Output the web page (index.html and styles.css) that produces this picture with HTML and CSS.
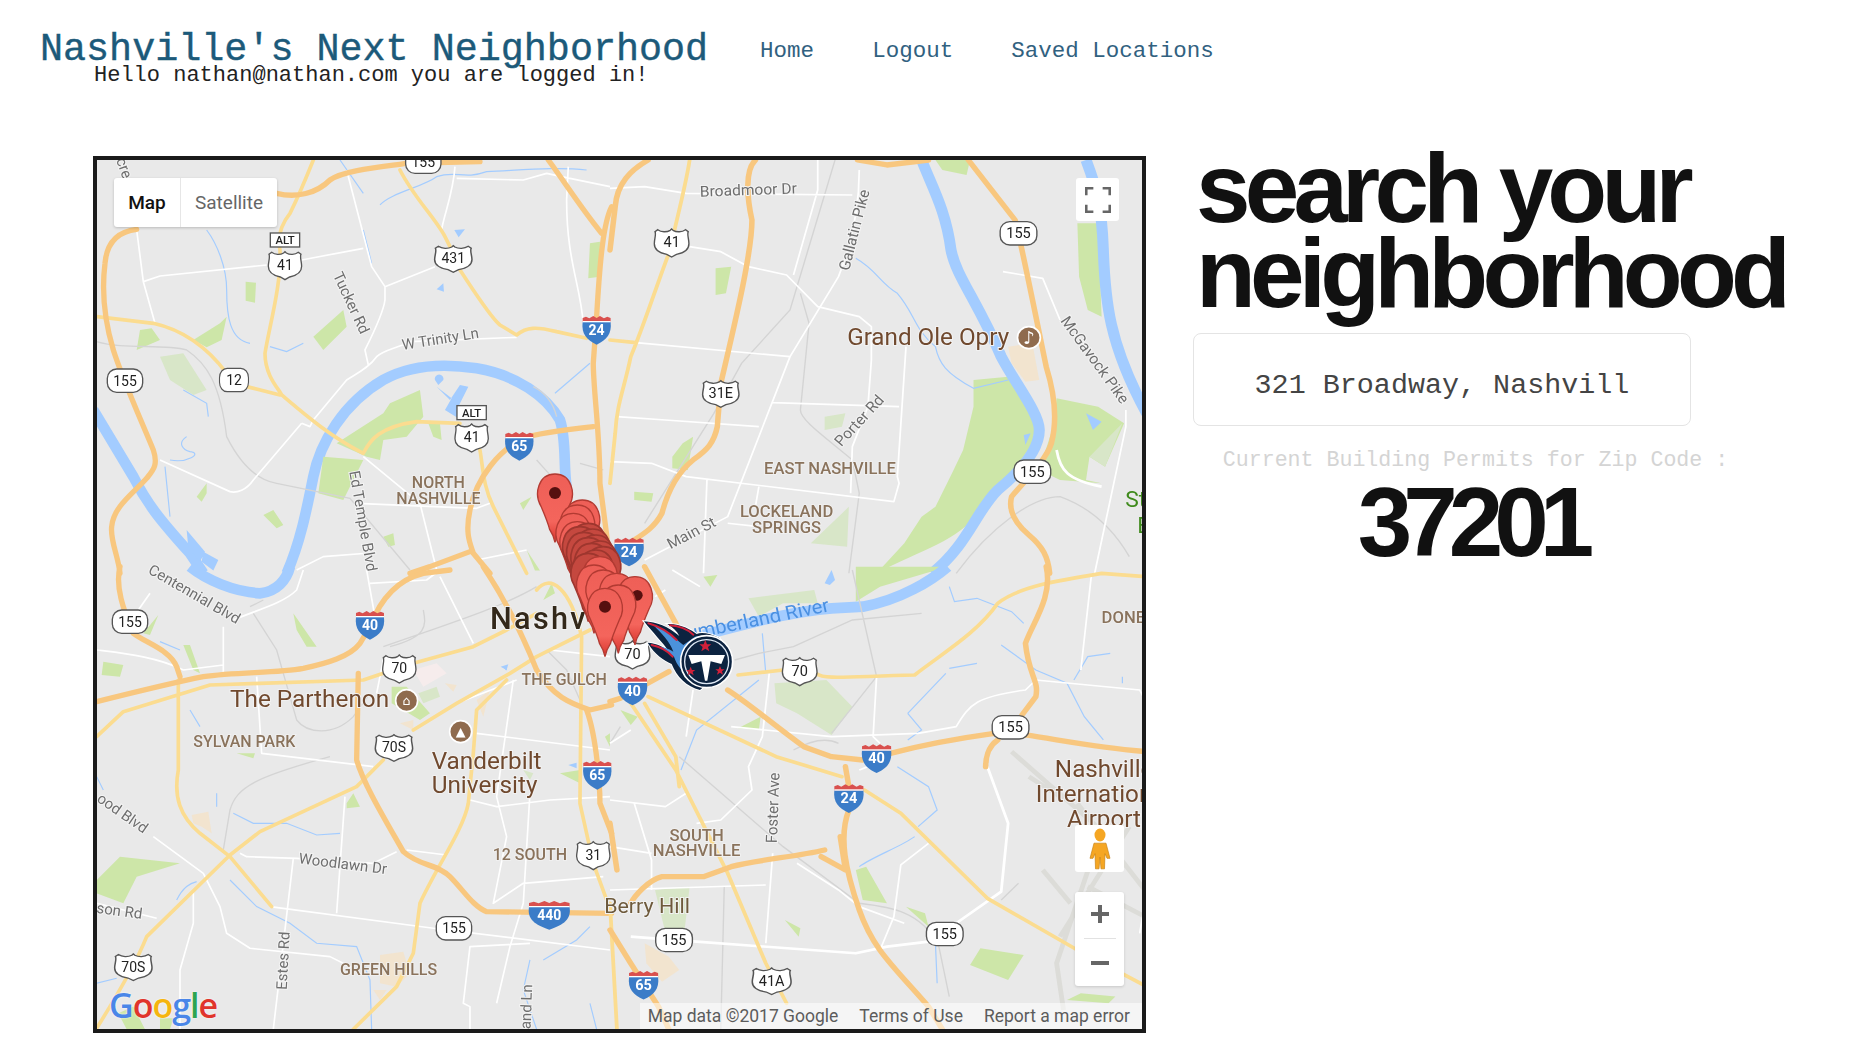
FILE: index.html
```html
<!DOCTYPE html>
<html lang="en">
<head>
    <meta charset="UTF-8">
    <title>Nashville's Next Neighborhood</title>
    <link rel="stylesheet" href="styles.css">
</head>
<body>
    <header class="top">
        <div class="brand">
            <div class="brand-title">Nashville's Next Neighborhood</div>
            <div class="brand-hello">Hello nathan@nathan.com you are logged in!</div>
        </div>
        <nav class="nav">
            <a href="#">Home</a>
            <a href="#">Logout</a>
            <a href="#">Saved Locations</a>
        </nav>
    </header>

    <main class="main">
        <div class="map">
            <svg class="map-art" viewBox="97 160 1045 869" xmlns="http://www.w3.org/2000/svg">
                <defs>
                    <g id="us"><path d="M-40-38C-30-30-14-30-4-36L0-40L4-36C14-30 30-30 40-38L48-32C44-24 50-10 50 4C50 24 34 32 14 36L0 44L-14 36C-34 32-50 24-50 4C-50-10-44-24-48-32Z" fill="#fff" stroke="#555" stroke-width="4"/></g>
                    <g id="oval"><rect x="-53" y="-35" width="106" height="70" rx="28" fill="#fff" stroke="#555" stroke-width="4"/></g>
                    <g id="alt"><rect x="-44" y="-21" width="88" height="42" fill="#fff" stroke="#555" stroke-width="4"/></g>
                    <g id="inter"><path d="M-42-24H42C46 12 30 30 0 44C-30 30-46 12-42-24Z" fill="#3b7cc8"/><path d="M-42-24V-36L-32-40L-22-35L-10-42L0-36L10-42L22-35L32-40L42-36V-24Z" fill="#d9504e"/><path d="M-42-25H42" stroke="#fff" stroke-width="4"/></g>
                    <g id="pin"><path d="M0 150C-5 125-12 118-16 112C-20 95-30 70-42 42C-64 5-50-55 0-55C50-55 64 5 42 42C30 70 20 95 16 112C12 118 5 125 0 150Z" fill="url(#pinfill)" stroke="#b23a32" stroke-width="4"/></g>
                    <g id="pin-dark"><path d="M0 150C-5 125-12 118-16 112C-20 95-30 70-42 42C-64 5-50-55 0-55C50-55 64 5 42 42C30 70 20 95 16 112C12 118 5 125 0 150Z" fill="#c5483f" stroke="#9e362e" stroke-width="5"/></g>
                    <linearGradient id="pinfill" x1="0" y1="0" x2="0" y2="1"><stop offset="0" stop-color="#ee5f57"/><stop offset=".7" stop-color="#f4655c"/><stop offset="1" stop-color="#d8332c"/></linearGradient>
                </defs>

                <!-- top left of the map -->
                <g transform="translate(90 150) scale(.3333)">
                    <path class="river" d="M590 1270C630 1180 650 1080 670 980C690 880 760 760 880 690C960 645 1060 640 1160 655C1280 675 1370 740 1410 810C1430 870 1420 950 1430 1010"/>
                    <path class="river" stroke-width="28" d="M10 780L130 980C170 1060 210 1110 300 1210L340 1270"/>
                    <path class="stream" d="M350 240C380 280 410 350 410 420C410 500 420 570 480 580M870 165C900 130 1000 110 1040 80C1100 60 1120 90 1190 65C1300 60 1400 50 1490 60M750 30L820 130M820 240L845 340M540 590L590 605L640 580M1395 730L1500 640M280 720L350 760L355 800M225 950L240 1100M290 860C260 880 280 900 300 905C340 910 290 940 240 930"/>
                    <path class="water" d="M1093 240L1125 238L1106 262ZM1040 418L1060 400L1062 425ZM1040 710L1080 750L1110 705L1135 710L1105 770L1105 805L1065 780L1085 745ZM1035 690A13 13 0 1 1 1060 690L1045 705ZM290 1140L345 1205L330 1235L295 1195ZM340 1205L385 1230L370 1262L335 1235Z"/>
                    <path class="park" d="M467 395L498 398L495 458L467 452ZM140 600L150 540L185 535L210 570ZM310 570L390 520L410 500L395 570L350 592ZM670 560L760 480L770 530L700 600ZM1500 280L1530 275L1530 380L1495 385ZM685 1030L700 920L820 930L760 1050ZM740 880L880 790L900 760L990 720L1000 800L950 860L880 870L870 930L830 920ZM1015 820L1050 820L1055 870L1030 860ZM320 1040L350 1000L350 1030L335 1055ZM520 1095L550 1080L580 1125L560 1135ZM880 1160L910 1150L915 1185L895 1190ZM1290 1060L1325 1040L1300 1080ZM1310 1200L1350 1262L1335 1262Z"/>
                    <path class="park-pale" d="M210 620L280 610L350 720L310 735L240 690Z"/>
                    <path class="rail" d="M20 575C100 600 220 580 290 600C350 640 390 700 410 860C450 940 500 990 560 1000L780 1045L960 1260M1330 710C1370 730 1390 760 1400 800M1340 930L1385 980M1470 940L1540 960"/>
                    <path class="minor" d="M140 240L160 395L195 520M160 395L210 378L530 345M635 330L820 295M770 60L845 350L885 410L885 450C880 490 840 570 825 600L835 645M885 410L1035 350M670 810L770 690C800 670 835 655 860 620C880 600 920 595 960 575L1280 562M1095 50C1090 130 1060 200 1055 240M1100 85L1300 90L1370 70L1440 85L1560 110M1435 50L1430 150C1430 330 1470 400 1480 520M635 820L660 830L670 810M635 820L490 990C470 1020 440 1030 420 1025L210 930M820 920L990 1060L1040 1260M800 1060L1160 1075L1200 1060M620 1260L700 1220L830 1210M1310 1200L1160 1230"/>
                    <path class="yellow" d="M670 30C650 80 630 130 600 190C580 215 560 250 570 300C575 400 540 520 525 610C525 680 570 720 575 735C640 790 720 860 820 910C840 870 870 830 980 815L1110 820M470 710L570 735M20 500L190 520C280 540 350 590 410 670M930 60C970 140 1040 210 1065 260L1080 290M1110 360C1150 420 1200 500 1230 525L1280 555C1310 530 1340 530 1400 545L1490 565M1170 900C1180 960 1180 1010 1210 1070L1310 1270"/>
                    <path class="orange" d="M560 130C620 145 680 130 720 90C760 60 880 50 950 40L1170 35M140 238C80 245 50 280 45 340C35 420 40 500 70 600C95 680 140 780 190 900C205 945 190 960 170 985C130 1030 70 1070 65 1130C60 1170 85 1220 90 1270M1375 30C1420 90 1470 170 1535 250M1565 170C1540 220 1530 330 1520 500L1510 640C1510 720 1530 850 1530 1000L1565 1270M1510 830C1420 840 1340 850 1300 865C1230 900 1160 980 1140 1080C1125 1150 1140 1180 1150 1210L1200 1270M1140 1205L1020 1250L960 1270"/>

                    <g transform="translate(1000 35)"><use href="#oval"/><text class="sh">155</text></g>
                    <g transform="translate(585 270)"><use href="#alt"/><text class="sh sh-alt">ALT</text></g>
                    <g transform="translate(585 345)"><use href="#us"/><text class="sh">41</text></g>
                    <g transform="translate(1090 325)"><use href="#us" transform="scale(1.12 .95)"/><text class="sh">431</text></g>
                    <g transform="translate(1520 540)"><use href="#inter"/><text class="sh sh-int">24</text></g>
                    <g transform="translate(105 692)"><use href="#oval"/><text class="sh">155</text></g>
                    <g transform="translate(432 690)"><use href="#oval" transform="scale(.82 1)"/><text class="sh">12</text></g>
                    <g transform="translate(1145 788)"><use href="#alt"/><text class="sh sh-alt">ALT</text></g>
                    <g transform="translate(1145 862)"><use href="#us"/><text class="sh">41</text></g>
                    <g transform="translate(1288 888)"><use href="#inter"/><text class="sh sh-int">65</text></g>

                    <text class="road" transform="translate(728 375) rotate(65)">Tucker Rd</text>
                    <text class="road" transform="translate(938 600) rotate(-9)">W Trinity Ln</text>
                    <text class="road" transform="translate(778 965) rotate(80)">Ed Temple Blvd</text>
                    <text class="road" transform="translate(78 30) rotate(70)">cre</text>
                    <text class="hood" x="1045" y="1015">NORTH</text>
                    <text class="hood" x="1045" y="1062">NASHVILLE</text>
                </g>

                <!-- top right of the map -->
                <g transform="translate(610 150) scale(.3462 .3333)">
                    <path class="park" d="M1050 690L1150 680L1230 820L1220 880C1170 970 1080 1040 1060 1090C1010 1170 900 1200 770 1270L850 1180L900 1100L940 1070L990 965L1020 900L1050 770ZM1290 745L1410 770L1485 820L1430 950L1385 920L1375 990L1420 1000L1300 990L1240 960L1280 830ZM305 355L350 350L335 430L305 435ZM940 30L1040 30L1030 75L960 60ZM180 920L210 880L240 860L225 960L180 955ZM70 1025L125 1030L120 1055L70 1050ZM1350 220L1410 220L1420 500L1380 480L1355 380Z"/>
                    <path class="park-pale" d="M620 800L680 790L670 830L620 840ZM580 1180L690 1070L685 1190ZM1385 920L1480 820L1430 950Z"/>
                    <path class="tan" d="M1150 590L1220 580L1240 690L1200 695L1160 640Z"/>
                    <path class="river" d="M900 30C930 110 970 180 985 300C1000 380 1060 450 1130 620C1170 700 1240 790 1240 840C1240 900 1190 960 1120 1020C1060 1080 1030 1190 930 1270"/>
                    <path class="river" stroke-width="25" d="M1375 30C1400 100 1420 150 1425 300C1430 450 1440 580 1550 790"/>
                    <path class="stream" d="M710 325C770 360 780 400 830 430C880 490 880 540 940 590C950 640 970 670 1050 715L1150 690"/>
                    <path class="water" d="M1375 790L1420 815L1395 840ZM1195 855L1215 850L1200 885Z"/>
                    <path class="rail" d="M650 30L520 480L380 640L300 790L100 1120M550 430L575 520L550 780C550 810 620 860 700 930L720 1030L690 1270M1000 1270C1100 1130 1220 1040 1300 1040C1380 1070 1450 1130 1500 1220"/>
                    <path class="minor" d="M720 60C720 130 710 250 660 380L520 620L340 1100L100 1230M0 115L100 110L220 130L700 135M230 290L320 305L400 350L510 375L600 470L720 500L755 530L755 630L745 770L700 890L695 1030M75 578L520 620M20 800L160 810L430 830M470 758L835 770M855 590L830 980L835 1000L820 1055L220 980L120 940L0 935M1135 365L1250 385L1300 510M1490 780L1490 830L1400 1270M280 990L270 1270M430 1010L420 1070M340 1120L430 1130M600 30L600 120L530 375"/>
                    <path class="minor-wide" d="M1290 900C1300 960 1320 990 1420 1010"/>
                    <path class="yellow" d="M230 30C220 100 200 180 170 310C130 420 100 520 60 620C40 720 20 760 15 850L0 1000M0 570L75 578"/>
                    <path class="orange" d="M1035 30L1170 210C1190 290 1230 500 1260 650C1290 750 1290 820 1275 880C1260 930 1200 990 1160 1040C1150 1080 1170 1120 1210 1155C1250 1190 1265 1220 1270 1270M420 30C390 60 395 140 410 210C410 300 370 480 320 700L310 830C300 880 280 900 240 930C180 980 160 1050 150 1090C130 1130 100 1150 70 1170M110 30C60 60 20 100 15 170L0 300M715 30L800 45L920 30"/>

                    <g transform="translate(178 277)"><use href="#us"/><text class="sh">41</text></g>
                    <g transform="translate(320 730)"><use href="#us" transform="scale(1.05 .95)"/><text class="sh">31E</text></g>
                    <g transform="translate(1180 250)"><use href="#oval"/><text class="sh">155</text></g>
                    <g transform="translate(1220 965)"><use href="#oval"/><text class="sh">155</text></g>
                    <g transform="translate(55 1205)"><use href="#inter"/><text class="sh sh-int">24</text></g>

                    <text class="road" transform="translate(260 140) rotate(-2)">Broadmoor Dr</text>
                    <text class="road" transform="translate(690 364) rotate(-76)">Gallatin Pike</text>
                    <text class="road" transform="translate(1300 512) rotate(55)">McGavock Pike</text>
                    <text class="road" transform="translate(668 892) rotate(-48)">Porter Rd</text>
                    <text class="road" transform="translate(175 1198) rotate(-28)">Main St</text>
                    <text class="poi" x="685" y="585">Grand Ole Opry</text>
                    <circle class="poi-dot" cx="1210" cy="563" r="33"/>
                    <text class="poi-icon" x="1210" y="583">♪</text>
                    <text class="hood hood-start" x="445" y="973">EAST NASHVILLE</text>
                    <text class="hood" x="510" y="1102">LOCKELAND</text>
                    <text class="hood" x="510" y="1150">SPRINGS</text>
                    <text class="green-label" x="1488" y="1072">St</text>
                    <text class="green-label" x="1523" y="1150">B</text>
                </g>

                <!-- bottom left of the map -->
                <g transform="translate(90 570) scale(.3333)">
                    <path class="river" d="M300 -10C350 30 430 65 510 70C560 65 590 30 600 -10"/>
                    <path class="park" d="M20 930L90 860L270 880L140 920L100 1000L20 970ZM40 275L100 285L90 320L35 315ZM610 130L680 230L650 230L620 180ZM160 190L205 135L180 195ZM770 700L790 670L810 710L770 715ZM280 225L300 225L330 310L310 300ZM905 350L950 350L1020 430L990 450L905 400ZM440 550L495 550L490 565ZM1410 610L1470 600L1470 640ZM85 1330L130 1310L165 1378H110ZM210 1345L250 1345L240 1378H210ZM1385 40L1360 90L1395 70ZM1545 500L1560 490L1560 530Z"/>
                    <path class="park-pale" d="M985 370L1040 350L1050 380L1000 400ZM1300 600L1330 610L1320 630Z"/>
                    <path class="pinkish" d="M970 300L1040 280L1070 310L1000 350Z"/>
                    <path class="tan" d="M305 735L355 725L365 790L335 770L310 760ZM870 1155L940 1145L960 1210L920 1250L870 1240ZM1065 340L1100 345L1090 365ZM930 460L970 450L970 480ZM850 1260L890 1260L870 1290ZM1160 390L1200 360L1180 440Z"/>
                    <path class="stream" d="M430 730L490 760L590 760L680 795L750 790M420 930L500 1010L600 1060L680 1120L800 1130L840 1230L845 1378M260 990C280 950 300 940 320 935M300 420L330 470M380 670V710M20 620L40 660M210 215L270 240M1320 1170L1300 1260L1340 1378M1500 1070L1460 1110L1360 1170M1500 1300L1520 1378M20 1240L80 1225M1240 290L1250 300"/>
                    <path class="water" d="M1232 290L1255 283L1250 300ZM1435 585L1460 578L1460 595Z"/>
                    <path class="rail" d="M490 130L560 240L620 450C650 490 730 500 790 440L840 370M420 720C440 650 500 620 720 560M400 840L420 720M1000 120C1010 170 1010 200 900 230M1340 50C1240 110 1080 160 880 230M1370 240L1430 300L1470 390M480 110L520 90"/>
                    <path class="minor" d="M400 170L400 310M20 240C100 250 200 260 280 300L400 285M500 320L515 550L850 590M1160 490L1560 540M950 840L1070 855M190 800L340 910L390 1010L410 1090L480 1135L720 1160L800 1200M450 850L470 860L620 865L850 880L920 845M540 1010L1030 1075L1560 1140M610 865L550 1378M765 680L740 1030M310 960L310 1060L270 1200L270 1378M20 1000L200 1045M1320 1120L1140 1130L1120 1300L1140 1310L1140 1378M840 40L1010 30L1050 0M1050 20L1150 220M1270 330L1220 680L1250 800L1210 1000L1300 940L1540 920M430 150C500 120 580 100 620 60L640 0M145 120L180 70M1320 670L1300 1000L1260 1130L1220 1300M1140 690L1220 710L1380 690L1560 680M830 0L860 170M1380 240L1560 260M860 370L880 270M1100 400L1280 330"/>
                    <path class="yellow" d="M20 500L100 425L360 345L820 330L880 310M970 280L1150 230L1250 180L1340 130M970 480L1100 400L1260 310L1340 260L1500 180M880 570L800 650L510 785L420 855L170 1100C130 1200 60 1310 20 1375M265 330L265 600C250 680 270 740 330 790L420 860L545 1010M1250 330L1160 420L1150 550L1135 700C1120 780 1040 890 990 1000L970 1150L920 1250L790 1378M1340 60C1380 10 1440 50 1475 200L1470 700L1510 880L1565 1030"/>
                    <path class="orange" d="M20 395C120 370 240 340 340 320C440 305 560 310 640 295C710 280 780 260 810 220L840 170C870 90 920 30 1000 10L1080 0M90 -10C75 50 100 120 130 190C170 220 240 240 260 290L270 320M805 310L800 570C820 640 880 740 940 845C990 890 1040 880 1080 920C1120 960 1150 1010 1190 1025L1565 1030M1180 -10C1220 50 1280 150 1340 300C1390 380 1440 400 1500 420L1565 405M1490 420C1520 500 1530 650 1530 700L1565 790"/>

                    <g transform="translate(120 155)"><use href="#oval"/><text class="sh">155</text></g>
                    <g transform="translate(840 165)"><use href="#inter"/><text class="sh sh-int">40</text></g>
                    <g transform="translate(928 295)"><use href="#us"/><text class="sh">70</text></g>
                    <g transform="translate(912 532)"><use href="#us" transform="scale(1.12 .95)"/><text class="sh">70S</text></g>
                    <g transform="translate(1522 615)"><use href="#inter"/><text class="sh sh-int">65</text></g>
                    <g transform="translate(1510 855)"><use href="#us"/><text class="sh">31</text></g>
                    <g transform="translate(1378 1035)"><use href="#inter" transform="scale(1.45 1)"/><text class="sh sh-int">440</text></g>
                    <g transform="translate(1092 1075)"><use href="#oval"/><text class="sh">155</text></g>
                    <g transform="translate(130 1190)"><use href="#us" transform="scale(1.12 .95)"/><text class="sh">70S</text></g>

                    <text class="road" transform="translate(172 8) rotate(30)">Centennial Blvd</text>
                    <text class="road" transform="translate(625 880) rotate(7)">Woodlawn Dr</text>
                    <text class="road" transform="translate(18 692) rotate(35)">ood Blvd</text>
                    <text class="road" transform="translate(18 1028) rotate(8)">son Rd</text>
                    <text class="road" transform="translate(590 1260) rotate(-87)">Estes Rd</text>
                    <text class="road" transform="translate(1322 1378) rotate(-88)">and Ln</text>
                    <text class="city" x="1200" y="176">Nashv</text>
                    <text class="hood hood-start" x="1295" y="346">THE GULCH</text>
                    <text class="hood hood-start" x="310" y="532">SYLVAN PARK</text>
                    <text class="hood hood-start" x="1208" y="870">12 SOUTH</text>
                    <text class="hood hood-start" x="750" y="1215">GREEN HILLS</text>
                    <text class="poi poi-big" x="420" y="412">The Parthenon</text>
                    <circle class="poi-dot" cx="950" cy="392" r="33"/>
                    <text class="poi-icon poi-icon-small" x="950" y="405">⌂</text>
                    <circle class="poi-dot" cx="1112" cy="485" r="33"/>
                    <text class="poi-icon poi-icon-small" x="1112" y="498">▲</text>
                    <text class="poi poi-big" x="1025" y="597">Vanderbilt</text>
                    <text class="poi poi-big" x="1025" y="670">University</text>
                </g>

                <!-- bottom right of the map -->
                <g transform="translate(610 570) scale(.3462 .3333)">
                    <path class="park" d="M710 95L780 50L975 -10H710ZM1040 1185L1070 1135L1195 1155L1150 1230ZM740 890L710 900L730 990L800 1000ZM855 1010L910 1030L920 1070ZM370 475L435 440L430 480ZM270 20L310 15L290 50ZM30 420L80 440L60 465ZM1320 1290L1360 1270L1460 1280L1440 1300ZM505 1050L550 1075L545 1100Z"/>
                    <path class="park-pale" d="M475 340L625 330L700 410L640 495L540 430L480 400ZM400 85L590 60L600 100L500 100L430 140ZM130 960L230 950L210 1130L170 1130Z"/>
                    <path class="tan" d="M100 1120L170 1160L200 1200L150 1235L105 1180Z"/>
                    <path class="river" stroke-width="24" d="M270 195C400 160 520 125 640 115L730 110C840 90 930 30 975 -10"/>
                    <path class="water" d="M620 40L640 0L650 30L635 45Z"/>
                    <path class="stream" d="M980 50L995 95L1060 85L1160 125L1195 160M860 430L900 480L860 510M1130 225L1230 300L1320 340L1370 440L1425 510M830 590L920 650L945 720L890 770M720 890C760 860 840 830 880 800M980 295L1060 280M860 430L970 310M1340 330L1380 260L1445 250M205 600L250 480L430 330M440 190L450 310M940 1120L945 1240M1480 320L1480 340"/>
                    <path class="runway" d="M1160 545L1440 800M1210 620L1300 680M1350 700L1545 960M1310 1320L1290 1180L1420 780M1250 900L1330 1000M1500 770L1300 1100M1380 950L1545 1040"/>
                    <path class="rail" d="M320 1378L330 950M660 520C640 510 600 500 530 540M200 560L500 830L720 1000C800 1010 900 1020 950 1130L980 1280M700 0L770 320L640 490M900 130L700 150L530 230L430 250L360 270M30 470L0 520M1180 940L1130 990"/>
                    <path class="minor" d="M350 470L640 500L890 490L1000 470C1040 400 1060 380 1200 360L1230 330L1530 360L1545 390M240 360L220 500M460 310L440 500L400 590L410 660L320 750L250 760M770 320L760 500L780 520M470 850L450 1120M0 690L160 710L220 670M70 700L120 870L120 960M0 830L120 850M0 960L450 945M1390 20L1360 300M720 600L745 590M920 820L840 885L820 1040L780 1140M180 0L260 50M130 80L160 60M0 520L60 480M540 880L660 960L720 1010L850 1060M1545 1000L1530 1090"/>
                    <path class="minor-wide" d="M60 1100L250 1115L710 1150L800 1130L920 1115L1000 1060L1130 965L1150 760L1090 590"/>
                    <path class="yellow" d="M370 315L500 300M595 310C620 330 680 320 880 315C960 250 1060 190 1120 100C1180 50 1300 30 1420 10L1550 20M110 380L480 560L670 620M735 660L840 730L1090 985L1350 1140L1550 1250M60 400L190 600L340 910L450 1180L510 1300M100 400L190 560L200 650M0 1000L20 1378"/>
                    <path class="orange" d="M340 360C400 400 480 470 560 530L640 560L730 570M810 550C920 520 1040 500 1110 490L1200 495C1300 510 1420 535 1550 545M1260 -10C1280 80 1220 160 1200 220C1210 320 1240 330 1230 380L1190 435M1120 510C1090 530 1085 570 1085 590M680 590L690 650M690 720C660 800 680 900 720 1020C760 1140 820 1190 920 1310L960 1378M620 840C540 860 420 870 350 890L270 920L150 920C110 930 70 980 60 1000M0 1080L60 1180L140 1310L170 1378M100 345L170 305M0 395L30 385M100 -10L190 160L220 220M0 760L20 900M610 860L680 900L665 800"/>

                    <g transform="translate(65 253)"><use href="#us"/><text class="sh">70</text></g>
                    <g transform="translate(548 303)"><use href="#us"/><text class="sh">70</text></g>
                    <g transform="translate(65 362)"><use href="#inter"/><text class="sh sh-int">40</text></g>
                    <g transform="translate(770 565)"><use href="#inter"/><text class="sh sh-int">40</text></g>
                    <g transform="translate(690 685)"><use href="#inter"/><text class="sh sh-int">24</text></g>
                    <g transform="translate(1157 472)"><use href="#oval"/><text class="sh">155</text></g>
                    <g transform="translate(185 1110)"><use href="#oval"/><text class="sh">155</text></g>
                    <g transform="translate(967 1092)"><use href="#oval"/><text class="sh">155</text></g>
                    <g transform="translate(467 1232)"><use href="#us" transform="scale(1.12 .95)"/><text class="sh">41A</text></g>
                    <g transform="translate(97 1245)"><use href="#inter"/><text class="sh sh-int">65</text></g>

                    <text class="river-label" transform="translate(190 218) rotate(-12)">Cumberland River</text>
                    <text class="road" transform="translate(482 820) rotate(-88)">Foster Ave</text>
                    <text class="hood hood-start" x="1420" y="160">DONE</text>
                    <text class="hood" x="250" y="812">SOUTH</text>
                    <text class="hood" x="250" y="858">NASHVILLE</text>
                    <text class="poi poi-dim" x="-17" y="1030">Berry Hill</text>
                    <text class="poi" x="1285" y="622">Nashville</text>
                    <text class="poi" x="1230" y="695">Internation</text>
                    <text class="poi" x="1320" y="770">Airport</text>
                </g>

                <!-- pins and stadium logo -->
                <g transform="translate(520 460) scale(.3333)">
                    <use href="#pin" x="105" y="97"/>
                    <circle class="pin-dot" cx="105" cy="99" r="18"/>
                    <use href="#pin" x="187" y="175"/>
                    <use href="#pin" x="172" y="190"/>
                    <use href="#pin" x="160" y="215"/>
                    <use href="#pin" x="172" y="240"/>
                    <use href="#pin-dark" x="205" y="245"/>
                    <use href="#pin-dark" x="180" y="255"/>
                    <use href="#pin-dark" x="218" y="262"/>
                    <use href="#pin-dark" x="192" y="272"/>
                    <use href="#pin-dark" x="228" y="280"/>
                    <use href="#pin-dark" x="205" y="288"/>
                    <use href="#pin-dark" x="240" y="298"/>
                    <use href="#pin-dark" x="215" y="305"/>
                    <use href="#pin-dark" x="250" y="315"/>
                    <use href="#pin-dark" x="228" y="325"/>
                    <use href="#pin-dark" x="205" y="335"/>
                    <use href="#pin" x="240" y="345"/>
                    <use href="#pin" x="222" y="370"/>
                    <use href="#pin" x="250" y="385"/>
                    <use href="#pin" x="290" y="395"/>
                    <use href="#pin" x="345" y="405"/>
                    <circle class="pin-dot" cx="352" cy="406" r="16"/>
                    <use href="#pin" x="295" y="430"/>
                    <use href="#pin" x="255" y="440"/>
                    <circle class="pin-dot" cx="255" cy="440" r="18"/>

                    <path d="M372 484C410 486 445 500 478 528C470 512 458 502 442 492C480 490 515 510 530 522C545 515 570 520 600 535L620 620L540 690C500 680 470 650 455 612C430 600 405 585 383 548C410 550 430 560 445 572C430 550 400 520 372 484Z" fill="#0c2340" stroke="#fff" stroke-width="6" paint-order="stroke"/>
                    <path d="M400 495C430 505 460 530 490 555L525 530C545 525 565 528 590 540L510 650C490 640 470 615 462 590C445 575 425 565 410 560C430 560 445 565 460 575C450 545 425 520 400 495Z" fill="#4b92db"/>
                    <path d="M385 490C420 500 445 515 470 540M395 555C420 560 445 575 458 590M450 496C480 498 505 510 520 524" fill="none" stroke="#d0203a" stroke-width="6" stroke-linecap="round"/>
                    <circle cx="560" cy="605" r="78" fill="#0c2340" stroke="#fff" stroke-width="5"/>
                    <circle cx="560" cy="605" r="66" fill="#0c2340" stroke="#dfe9f5" stroke-width="4"/>
                    <path d="M505 585H615L604 612L572 604L562 662H555L544 604L515 612Z" fill="#fff"/>
                    <path d="M556 540L561 553H574L564 561L568 574L556 566L544 574L548 561L538 553H551ZM512 620L516 630H526L518 636L521 646L512 640L503 646L506 636L498 630H508ZM600 618L604 628H614L606 634L609 644L600 638L591 644L594 634L586 628H596Z" fill="#d0203a"/>
                </g>
            </svg>

            <div class="map-type">
                <span class="map-type-on">Map</span>
                <span class="map-type-off">Satellite</span>
            </div>
            <div class="map-btn map-full">
                <svg width="26" height="26" viewBox="0 0 28 28"><path d="M1 9V1H9M19 1H27V9M27 19V27H19M9 27H1V19" fill="none" stroke="#666" stroke-width="3.5"/></svg>
            </div>
            <div class="map-btn map-peg">
                <svg width="22" height="42" viewBox="0 0 22 36" preserveAspectRatio="none"><circle cx="11" cy="6" r="5.5" fill="#f5a623"/><path d="M5 13H17L21 26H18L16 22L15.5 35H12L11 25L10 35H6.5L6 22L4 26H1Z" fill="#f5a623" stroke="#c67f10" stroke-width=".6"/></svg>
            </div>
            <div class="map-btn map-zoom">
                <svg class="zoom-sign" width="18" height="18" viewBox="0 0 18 18"><path d="M7 0H11V7H18V11H11V18H7V11H0V7H7Z" fill="#666"/></svg>
                <div class="zoom-line"></div>
                <svg class="zoom-sign" width="18" height="18" viewBox="0 0 18 18"><path d="M0 7H18V11H0Z" fill="#666"/></svg>
            </div>
            <div class="google"><span class="g-blue">G</span><span class="g-red">o</span><span class="g-yellow">o</span><span class="g-blue">g</span><span class="g-green">l</span><span class="g-red">e</span></div>
            <div class="map-foot">
                <span>Map data ©2017 Google</span>
                <span>Terms of Use</span>
                <span>Report a map error</span>
            </div>
        </div>

        <section class="panel">
            <h1 class="panel-title">search your<br>neighborhood</h1>
            <div class="search-box">321 Broadway, Nashvill</div>
            <p class="zip-label">Current Building Permits for Zip Code :</p>
            <p class="zip-code">37201</p>
        </section>
    </main>
</body>
</html>
```

FILE: styles.css
```css
body{
    margin: 0;
    background-color: #fff;
    overflow: hidden;
}

/* header */
.top{
    display: flex;
    height: 156px;
    padding: 33px 0 0 40px;
    box-sizing: border-box;
}
.brand-title{
    font-family: "Liberation Mono", monospace;
    font-size: 38.4px;
    line-height: 34px;
    color: #1c5a7a;
    white-space: nowrap;
    -webkit-text-stroke: .4px #1c5a7a;
}
.brand-hello{
    margin: -3px 0 0 54px;
    font-family: "Liberation Mono", monospace;
    font-size: 22px;
    line-height: 24px;
    color: #222;
    white-space: nowrap;
}
.nav{
    display: flex;
    gap: 58px;
    margin-left: 52px;
    padding-top: 4px;
}
.nav a{
    font-family: "Liberation Mono", monospace;
    font-size: 22.5px;
    line-height: 28px;
    color: #31617f;
    text-decoration: none;
}

/* main */
.main{
    display: flex;
    padding-left: 93px;
}
.map{
    position: relative;
    flex: none;
    width: 1045px;
    height: 869px;
    border: 4px solid #1a1a1a;
    background-color: #e9e9e9;
    overflow: hidden;
    font-family: Roboto, sans-serif;
}
.map-art{
    display: block;
    width: 1045px;
    height: 869px;
    filter: blur(.6px);
}

/* map drawing */
.river{ fill: none; stroke: #a3ccff; stroke-width: 32; }
.stream{ fill: none; stroke: #a3ccff; stroke-width: 3.5; }
.water{ fill: #a3ccff; }
.park{ fill: #cde6a8; }
.park-pale{ fill: #d8e6c8; }
.tan{ fill: #f2e4cf; }
.pinkish{ fill: #f6ecec; }
.rail{ fill: none; stroke: #d4d4d4; stroke-width: 4; }
.runway{ fill: none; stroke: #dcdcd8; stroke-width: 14; }
.minor{ fill: none; stroke: #fff; stroke-width: 5; stroke-linejoin: round; }
.minor-wide{ fill: none; stroke: #fff; stroke-width: 8; stroke-linejoin: round; }
.yellow{ fill: none; stroke: #fbdc90; stroke-width: 11; stroke-linejoin: round; stroke-linecap: round; }
.orange{ fill: none; stroke: #f8c77f; stroke-width: 16; stroke-linejoin: round; stroke-linecap: round; }

.sh{ font-size: 42px; fill: #222; text-anchor: middle; dominant-baseline: central; }
.sh-alt{ font-size: 34px; font-weight: 500; }
.sh-int{ font-size: 42px; font-weight: 700; fill: #fff; }
.road{ font-size: 45px; fill: #6e6e6e; stroke: #f4f4f4; stroke-width: 6; paint-order: stroke; }
.hood{ font-size: 48px; font-weight: 500; fill: #8a735c; text-anchor: middle; stroke: #f2f2f2; stroke-width: 5; paint-order: stroke; }
.hood-start{ text-anchor: start; }
.poi{ font-size: 70px; fill: #70492e; stroke: #f2f2f2; stroke-width: 6; paint-order: stroke; }
.poi-big{ font-size: 73px; }
.poi-dim{ font-size: 62px; fill: #6e5a3c; }
.poi-dot{ fill: #8f6b4e; stroke: #fff; stroke-width: 5; }
.poi-icon{ font-family: "DejaVu Sans", sans-serif; font-size: 54px; fill: #fff; text-anchor: middle; }
.poi-icon-small{ font-size: 38px; }
.city{ font-size: 92px; font-weight: 500; letter-spacing: 7px; fill: #33281a; stroke: #f2f2f2; stroke-width: 6; paint-order: stroke; }
.river-label{ font-size: 58px; fill: #4a90e2; }
.green-label{ font-size: 66px; fill: #3f8a1c; }
.pin-dot{ fill: #56100f; }

/* map controls */
.map-type{
    position: absolute;
    left: 17px;
    top: 18px;
    display: flex;
    height: 49px;
    background-color: #fff;
    border-radius: 3px;
    font-size: 19px;
    line-height: 49px;
    box-shadow: 0 1px 3px rgba(0,0,0,.2);
}
.map-type-on{
    width: 66px;
    text-align: center;
    color: #111;
    font-weight: 500;
    border-right: 1px solid #e6e6e6;
}
.map-type-off{
    width: 96px;
    text-align: center;
    color: #666;
}
.map-btn{
    position: absolute;
    display: flex;
    align-items: center;
    justify-content: center;
    background-color: #fff;
    border-radius: 3px;
}
.map-full{
    left: 979px;
    top: 18px;
    width: 43px;
    height: 43px;
}
.map-peg{
    left: 978px;
    top: 665px;
    width: 49px;
    height: 47px;
}
.map-zoom{
    left: 978px;
    top: 732px;
    width: 49px;
    height: 94px;
    flex-direction: column;
    justify-content: flex-start;
    box-shadow: 0 1px 3px rgba(0,0,0,.15);
}
.zoom-sign{
    margin: 13px 0;
}
.zoom-line{
    flex: none;
    width: 32px;
    height: 1px;
    margin: 2px 0;
    background-color: #e2e2e2;
}
.google{
    position: absolute;
    left: 12px;
    bottom: 1px;
    font-family: "Open Sans", sans-serif;
    font-size: 34px;
    font-weight: 600;
    letter-spacing: -1px;
    text-shadow: 0 0 2px #fff;
}
.g-blue{ color: #4a86e8; }
.g-red{ color: #e0352c; }
.g-yellow{ color: #f5b50f; }
.g-green{ color: #2ea44f; }
.map-foot{
    position: absolute;
    right: 0;
    bottom: 0;
    display: flex;
    gap: 21px;
    padding: 0 12px 0 8px;
    font-size: 17.5px;
    line-height: 26px;
    color: #5c5c5c;
    background-color: rgba(255,255,255,.55);
}

/* search side */
.panel{
    flex: none;
    width: 565px;
    margin-left: 47px;
    font-family: "Liberation Sans", Arial, sans-serif;
}
.panel-title{
    margin: -10px 0 0 3px;
    font-size: 98px;
    font-weight: 700;
    line-height: 85px;
    letter-spacing: -5.8px;
    color: #111;
    white-space: nowrap;
}
.search-box{
    box-sizing: border-box;
    width: 498px;
    height: 93px;
    margin-top: 17px;
    border: 1px solid #e4e4e4;
    border-radius: 8px;
    font-family: "Liberation Mono", monospace;
    font-size: 28.4px;
    line-height: 104px;
    text-align: center;
    color: #444;
}
.zip-label{
    margin: 20px 0 0 0;
    font-family: "Liberation Mono", monospace;
    font-size: 21.6px;
    line-height: 28px;
    text-align: center;
    color: #d4d4d4;
    white-space: nowrap;
}
.zip-code{
    margin: -2px 0 0 0;
    padding-right: 8px;
    font-size: 98px;
    font-weight: 700;
    line-height: 100px;
    letter-spacing: -9px;
    text-align: center;
    color: #111;
}
```
